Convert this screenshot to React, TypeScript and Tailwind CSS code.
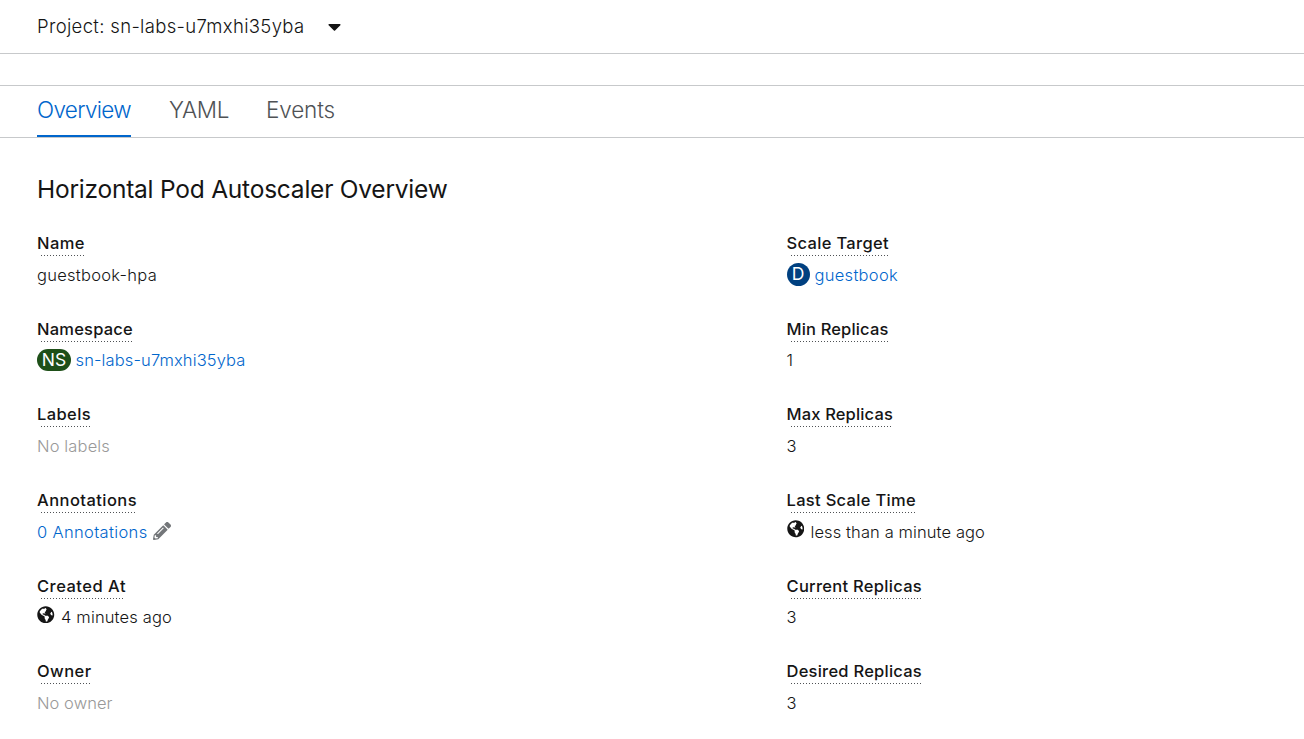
import type { ReactNode } from "react";
import { FaCaretDown, FaGlobeAmericas, FaPencilAlt } from "react-icons/fa";

function Field({ label, tracking, children }: { label: string; tracking: string; children: ReactNode }) {
  return (
    <div className="h-[85.6px]">
      <dt className="flex">
        <span
          className={`h-[25px] bg-[repeating-linear-gradient(to_right,transparent_0_2px,#4f5255_2px_3px)] bg-[length:calc(100%-3px)_1px] bg-[position:2px_100%] bg-no-repeat text-[16.5px] leading-[24px] font-medium whitespace-nowrap ${tracking}`}
        >
          {label}
        </span>
      </dt>
      <dd className="mt-[6.5px] flex h-6 items-center text-[16.5px] leading-6 font-light whitespace-nowrap">{children}</dd>
    </div>
  );
}

function Timestamp({ text, tracking }: { text: string; tracking: string }) {
  return (
    <>
      <FaGlobeAmericas className="mr-[6.5px] -mt-[5px] size-[17.5px]" />
      <span className={tracking}>{text}</span>
    </>
  );
}

export default function App() {
  return (
    <div className="h-[739px] overflow-hidden bg-white font-['Inter','Liberation_Sans',sans-serif] text-[#151515]">
      <header className="flex h-[54px] items-center border-b border-[#c7c9cb] pb-[2px] pl-[37px]">
        <button className="flex items-center text-[18.5px] leading-7 font-light">
          <span className="tracking-[0.335px]">Project: sn-labs-u7mxhi35yba</span>
          <FaCaretDown className="mt-px ml-[19px] size-[21px]" />
        </button>
      </header>
      <div className="h-8 border-b border-[#c7c9cb]" />
      <nav className="flex h-[52px] border-b border-[#c7c9cb] pl-[37px] text-[22.5px] leading-[48px] font-light text-[#4f5255]">
        <a className="mr-[38px] h-[51px] w-[94px] border-b-2 border-[#0066cc] tracking-[-0.672px] whitespace-nowrap text-[#0066cc]">Overview</a>
        <a className="mr-[37px] w-[60px] tracking-[-0.36px]">YAML</a>
        <a className="tracking-[-0.143px]">Events</a>
      </nav>
      <main className="pt-[33px] pl-[37px]">
        <h1 className="text-[24.5px] leading-9 font-normal tracking-[-0.227px]">Horizontal Pod Autoscaler Overview</h1>
        <div className="mt-[24.3px] grid grid-cols-[749.5px_1fr]">
          <dl>
            <Field label="Name" tracking="tracking-[0.449px]">
              <span className="tracking-[0.272px]">guestbook-hpa</span>
            </Field>
            <Field label="Namespace" tracking="tracking-[0.219px]">
              <span className="mr-[4.5px] -mt-px flex h-[22px] w-[34px] items-center justify-center rounded-full bg-[#1e4f18] text-[17.5px] font-normal text-white">NS</span>
              <a className="tracking-[0.129px] text-[#0066cc]">sn-labs-u7mxhi35yba</a>
            </Field>
            <Field label="Labels" tracking="tracking-[0.393px]">
              <span className="tracking-[0.141px] text-[#999999]">No labels</span>
            </Field>
            <Field label="Annotations" tracking="tracking-[0.442px]">
              <a className="tracking-[0.345px] text-[#0066cc]">0 Annotations</a>
              <FaPencilAlt className="-mt-[2px] ml-[5px] size-[18px] text-[#737679]" />
            </Field>
            <Field label="Created At" tracking="tracking-[0.491px]">
              <Timestamp text="4 minutes ago" tracking="tracking-[0.155px]" />
            </Field>
            <Field label="Owner" tracking="tracking-[0.434px]">
              <span className="tracking-[0.051px] text-[#999999]">No owner</span>
            </Field>
          </dl>
          <dl>
            <Field label="Scale Target" tracking="tracking-[0.333px]">
              <span className="mr-[5px] -mt-px flex size-[23px] items-center justify-center rounded-full bg-[#004080] text-[17.5px] font-normal text-white">D</span>
              <a className="tracking-[0.292px] text-[#0066cc]">guestbook</a>
            </Field>
            <Field label="Min Replicas" tracking="tracking-[0.154px]">1</Field>
            <Field label="Max Replicas" tracking="tracking-[0.155px]">3</Field>
            <Field label="Last Scale Time" tracking="tracking-[0.31px]">
              <Timestamp text="less than a minute ago" tracking="tracking-[0.1px]" />
            </Field>
            <Field label="Current Replicas" tracking="tracking-[0.285px]">3</Field>
            <Field label="Desired Replicas" tracking="tracking-[0.242px]">3</Field>
          </dl>
        </div>
      </main>
    </div>
  );
}
